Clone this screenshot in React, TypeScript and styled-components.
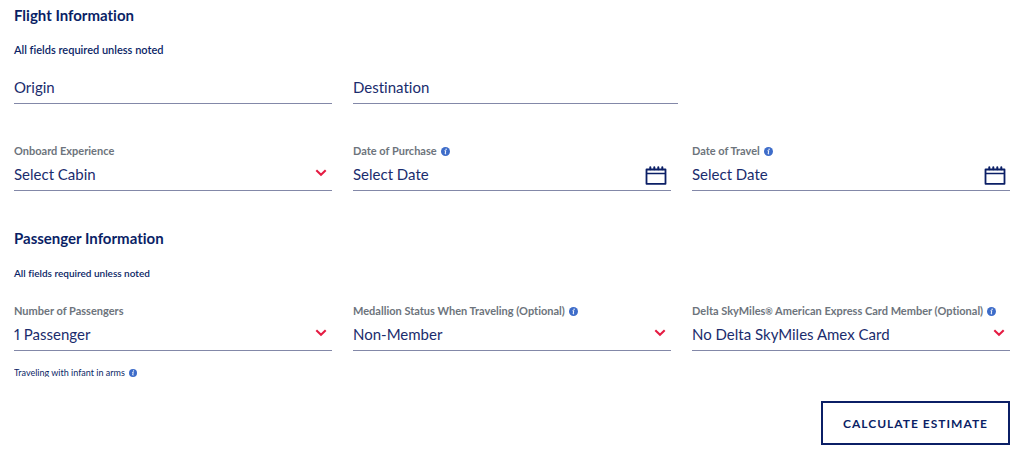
import React, { useId } from "react";
import styled, { createGlobalStyle } from "styled-components";

const navy = "#0b1f66";

const GlobalStyle = createGlobalStyle`
  *, *::before, *::after { box-sizing: border-box; }
  body {
    margin: 0;
    background: #fff;
    color: ${navy};
    font-family: Lato, "Open Sans", "Liberation Sans", sans-serif;
    font-variant-ligatures: none;
    font-variant-numeric: proportional-nums;
  }
`;

const Form = styled.form`
  padding: 5px 14px 11px;
`;

const Section = styled.section`
  & + & {
    margin-top: 37px;
  }
`;

const Heading = styled.h2`
  margin: 0 0 17px;
  font-size: 15px;
  line-height: 20px;
  font-weight: 700;
`;

const Note = styled.p<{ $small?: boolean }>`
  margin: 0;
  font-size: ${(p) => (p.$small ? 10 : 11)}px;
  line-height: 16px;
  font-weight: 600;
`;

const FieldRow = styled.div<{ $gap: number }>`
  display: grid;
  grid-template-columns: repeat(3, minmax(0, 1fr));
  column-gap: 21px;
  margin-top: ${(p) => p.$gap}px;
`;

const FieldBox = styled.div<{ $wide?: boolean }>`
  display: flex;
  flex-direction: column;
  margin-right: ${(p) => (p.$wide ? -7 : 0)}px;
`;

const LabelRow = styled.div`
  display: flex;
  align-items: center;
  gap: 4px;
  height: 16px;
  margin-bottom: 1px;
`;

const Label = styled.label`
  font-size: 11px;
  line-height: 16px;
  font-weight: 700;
  color: #6d747c;
  white-space: nowrap;
`;

const Registered = styled.span`
  font-size: 9px;
  line-height: 1;
`;

const Control = styled.div`
  display: grid;
  grid-template-columns: minmax(0, 1fr) auto;
  align-items: center;
  height: 31px;
  padding-bottom: 2px;
  border-bottom: 1px solid #8388a8;
`;

const controlText = `
  width: 100%;
  height: 28px;
  margin: 0;
  padding: 0;
  border: 0;
  border-radius: 0;
  outline-offset: 2px;
  background: transparent;
  color: #1a2c6d;
  font-family: inherit;
  font-variant-ligatures: inherit;
  font-variant-numeric: inherit;
  font-size: 15px;
  line-height: 28px;
`;

const TextInput = styled.input`
  ${controlText}
  &::placeholder {
    color: #1a2c6d;
    opacity: 1;
  }
`;

const Select = styled.select`
  ${controlText}
  grid-area: 1 / 1 / 2 / 3;
  appearance: none;
`;

const Chevron = styled.svg`
  grid-area: 1 / 2;
  margin: 0 5px 3px 0;
  pointer-events: none;
`;

const IconButton = styled.button`
  display: flex;
  padding: 0;
  border: 0;
  background: none;
  color: ${navy};
  cursor: pointer;
`;

const CalendarButton = styled(IconButton)`
  margin: 3px 4px 0 0;
`;

const InfantRow = styled.div`
  display: flex;
  align-items: center;
  gap: 4px;
  height: 12px;
  margin-top: 14px;
  overflow: hidden;
`;

const InfantText = styled.span`
  height: 12px;
  font-size: 9px;
  line-height: 16px;
`;

const InfantInfo = styled.span`
  padding-top: 4px;
`;

const Actions = styled.div`
  display: flex;
  justify-content: flex-end;
  margin-top: 24px;
`;

const SubmitButton = styled.button`
  height: 44px;
  padding: 0 20px;
  border: 2px solid ${navy};
  background: #fff;
  color: ${navy};
  font-family: inherit;
  font-size: 12px;
  font-weight: 700;
  letter-spacing: 1px;
  cursor: pointer;
`;

function InfoButton({ about, size = 9 }: { about: string; size?: number }) {
  return (
    <IconButton type="button" aria-label={`More about ${about}`}>
      <svg width={size} height={size} viewBox="0 0 18 18" aria-hidden="true">
        <circle cx="9" cy="9" r="9" fill="#3d6cc9" />
        <path d="M7 7.5h2.6L8.2 13.6h2" fill="none" stroke="#fff" strokeWidth="2" />
        <circle cx="10.2" cy="4.4" r="1.4" fill="#fff" />
      </svg>
    </IconButton>
  );
}

function CalendarIcon() {
  return (
    <svg width="22" height="19" viewBox="0 0 22 19" fill="none" stroke="currentColor" aria-hidden="true">
      <path d="M1.5 3.5h19v14.3h-19z" strokeWidth="1.8" strokeLinejoin="round" />
      <path d="M1.5 7.5h19" strokeWidth="1.5" />
      <path d="M5.3 1.2v2M9.3 1.2v2M13.3 1.2v2M17.3 1.2v2" strokeWidth="2" strokeLinecap="round" />
    </svg>
  );
}

type FieldProps = { label: string; info?: boolean };

function FieldLabel({ id, label, info }: FieldProps & { id: string }) {
  const [before, after] = label.split("®");
  return (
    <LabelRow>
      <Label htmlFor={id}>
        {before}
        {after !== undefined && <Registered>®</Registered>}
        {after}
      </Label>
      {info && <InfoButton about={label} />}
    </LabelRow>
  );
}

function SelectField({ label, info, options }: FieldProps & { options: string[] }) {
  const id = useId();
  return (
    <FieldBox>
      <FieldLabel id={id} label={label} info={info} />
      <Control>
        <Select id={id}>
          {options.map((o) => (
            <option key={o}>{o}</option>
          ))}
        </Select>
        <Chevron width="12" height="8" viewBox="0 0 12 8" aria-hidden="true">
          <path d="M1.3 1.3L6 5.8l4.7-4.5" fill="none" stroke="#e51c43" strokeWidth="2.1" />
        </Chevron>
      </Control>
    </FieldBox>
  );
}

function DateField({ label, info }: FieldProps) {
  const id = useId();
  return (
    <FieldBox>
      <FieldLabel id={id} label={label} info={info} />
      <Control>
        <TextInput id={id} placeholder="Select Date" />
        <CalendarButton type="button" aria-label={`Open calendar for ${label}`}>
          <CalendarIcon />
        </CalendarButton>
      </Control>
    </FieldBox>
  );
}

function PlaceField({ name, wide }: { name: string; wide?: boolean }) {
  return (
    <FieldBox $wide={wide}>
      <Control>
        <TextInput aria-label={name} placeholder={name} />
      </Control>
    </FieldBox>
  );
}

export default function App() {
  return (
    <>
      <GlobalStyle />
      <Form onSubmit={(e) => e.preventDefault()}>
        <Section>
          <Heading>Flight Information</Heading>
          <Note>All fields required unless noted</Note>
          <FieldRow $gap={15}>
            <PlaceField name="Origin" />
            <PlaceField name="Destination" wide />
          </FieldRow>
          <FieldRow $gap={39}>
            <SelectField label="Onboard Experience" options={["Select Cabin"]} />
            <DateField label="Date of Purchase" info />
            <DateField label="Date of Travel" info />
          </FieldRow>
        </Section>
        <Section>
          <Heading>Passenger Information</Heading>
          <Note $small>All fields required unless noted</Note>
          <FieldRow $gap={22}>
            <SelectField label="Number of Passengers" options={["1 Passenger"]} />
            <SelectField label="Medallion Status When Traveling (Optional)" info options={["Non-Member"]} />
            <SelectField
              label="Delta SkyMiles® American Express Card Member (Optional)"
              info
              options={["No Delta SkyMiles Amex Card"]}
            />
          </FieldRow>
          <InfantRow>
            <InfantText>Traveling with infant in arms</InfantText>
            <InfantInfo>
              <InfoButton about="traveling with infant in arms" size={8} />
            </InfantInfo>
          </InfantRow>
        </Section>
        <Actions>
          <SubmitButton type="submit">CALCULATE ESTIMATE</SubmitButton>
        </Actions>
      </Form>
    </>
  );
}
